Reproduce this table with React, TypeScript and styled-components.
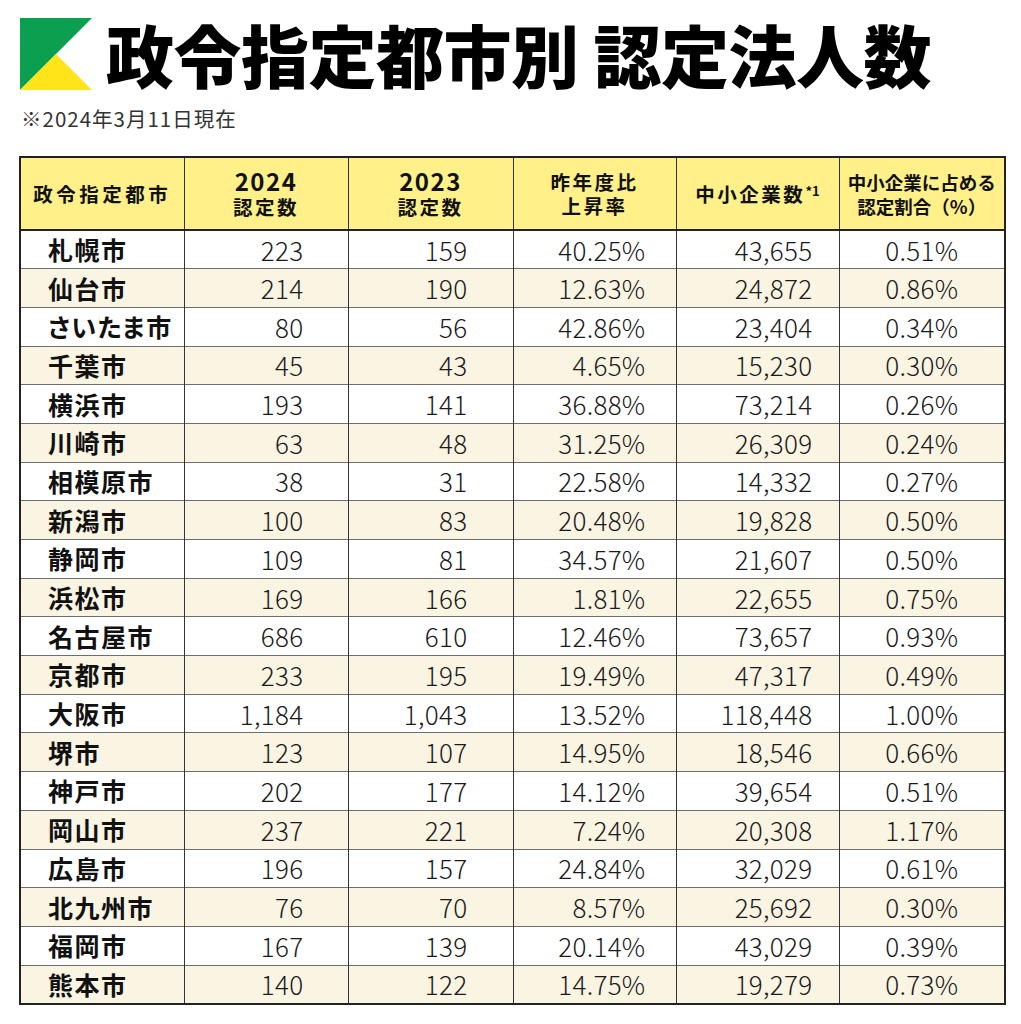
import { createGlobalStyle, styled } from 'styled-components';

const GlobalStyle = createGlobalStyle`
  html, body {
    margin: 0;
    padding: 0;
    background: #ffffff;
  }

  body {
    font-family: 'Noto Sans CJK JP', 'Noto Sans', sans-serif;
    color: #111111;
  }
`;

const SPage = styled.div`
  width: 1021px;
  padding: 18px 0 0 20px;
  box-sizing: border-box;
`;

const STitleBar = styled.header`
  display: flex;
  align-items: center;
  gap: 14px;
  height: 72px;
`;

const SLogo = styled.svg`
  flex: 0 0 72px;
  width: 72px;
  height: 72px;
`;

const STitle = styled.h1`
  margin: 0;
  font-size: 68px;
  font-weight: 900;
  line-height: 1;
  letter-spacing: -0.5px;
  color: #000000;
  white-space: nowrap;
`;

const SAsOf = styled.p`
  margin: 16px 0 0 1px;
  font-size: 20.5px;
  line-height: 24px;
  letter-spacing: 1px;
  color: #333333;
`;

const STable = styled.table`
  margin: 26px 0 0 -1px;
  width: 985px;
  table-layout: fixed;
  border-collapse: collapse;
  border: 2px solid #222222;
`;

const SHeadCell = styled.th<{ $tight?: boolean }>`
  height: 71px;
  padding: 0;
  background: #fff08a;
  border-left: 1.5px solid #333333;
  border-bottom: 2px solid #222222;
  font-size: ${({ $tight }) => ($tight ? '18.5px' : '19.5px')};
  font-weight: 700;
  line-height: 24px;
  letter-spacing: ${({ $tight }) => ($tight ? '0' : '2.5px')};
  text-align: center;
  vertical-align: middle;
  color: #111111;
`;

const SFirstHead = styled(SHeadCell)`
  letter-spacing: 3.5px;
`;

const SYear = styled.span`
  display: block;
  margin-bottom: 1px;
  font-size: 24px;
  line-height: 26px;
  letter-spacing: 1.5px;
`;

const SSup = styled.sup`
  font-size: 13px;
  line-height: 0;
  letter-spacing: 0;
  vertical-align: 6px;
`;

const SRow = styled.tr<{ $shaded: boolean }>`
  height: 38.7px;
  background: ${({ $shaded }) => ($shaded ? '#faf4e3' : '#ffffff')};

  & + & {
    border-top: 1px solid #6e6e6e;
  }
`;

const SNameCell = styled.td`
  padding: 0 0 0 27px;
  border-left: 1.5px solid #333333;
  font-size: 25px;
  font-weight: 700;
  font-feature-settings: 'palt';
  letter-spacing: 1.5px;
  line-height: 1;
  white-space: nowrap;
  color: #111111;
`;

const SNumCell = styled.td<{ $pad: number; $center?: boolean }>`
  padding: 0 ${({ $pad }) => $pad}px 0 0;
  border-left: 1.5px solid #333333;
  font-size: 26px;
  font-weight: 300;
  line-height: 1;
  letter-spacing: 0.3px;
  text-align: ${({ $center }) => ($center ? 'center' : 'right')};
  color: #1a1a1a;
`;

type CityRow = [string, string, string, string, string, string];

const rows: CityRow[] = [
  ['札幌市', '223', '159', '40.25%', '43,655', '0.51%'],
  ['仙台市', '214', '190', '12.63%', '24,872', '0.86%'],
  ['さいたま市', '80', '56', '42.86%', '23,404', '0.34%'],
  ['千葉市', '45', '43', '4.65%', '15,230', '0.30%'],
  ['横浜市', '193', '141', '36.88%', '73,214', '0.26%'],
  ['川崎市', '63', '48', '31.25%', '26,309', '0.24%'],
  ['相模原市', '38', '31', '22.58%', '14,332', '0.27%'],
  ['新潟市', '100', '83', '20.48%', '19,828', '0.50%'],
  ['静岡市', '109', '81', '34.57%', '21,607', '0.50%'],
  ['浜松市', '169', '166', '1.81%', '22,655', '0.75%'],
  ['名古屋市', '686', '610', '12.46%', '73,657', '0.93%'],
  ['京都市', '233', '195', '19.49%', '47,317', '0.49%'],
  ['大阪市', '1,184', '1,043', '13.52%', '118,448', '1.00%'],
  ['堺市', '123', '107', '14.95%', '18,546', '0.66%'],
  ['神戸市', '202', '177', '14.12%', '39,654', '0.51%'],
  ['岡山市', '237', '221', '7.24%', '20,308', '1.17%'],
  ['広島市', '196', '157', '24.84%', '32,029', '0.61%'],
  ['北九州市', '76', '70', '8.57%', '25,692', '0.30%'],
  ['福岡市', '167', '139', '20.14%', '43,029', '0.39%'],
  ['熊本市', '140', '122', '14.75%', '19,279', '0.73%'],
];

const Logo = () => (
  <SLogo viewBox='0 0 72 72'>
    <polygon points='0,0 72,0 0,72' fill='#0aa04f' />
    <polygon points='0,72 36,36 72,72' fill='#ffe41a' />
  </SLogo>
);

const App = () => (
  <SPage>
    <GlobalStyle />
    <STitleBar>
      <Logo />
      <STitle>政令指定都市別 認定法人数</STitle>
    </STitleBar>
    <SAsOf>※2024年3月11日現在</SAsOf>

    <STable>
      <colgroup>
        <col style={{ width: 164 }} />
        <col style={{ width: 164 }} />
        <col style={{ width: 165 }} />
        <col style={{ width: 163 }} />
        <col style={{ width: 163 }} />
        <col style={{ width: 166 }} />
      </colgroup>
      <thead>
        <tr>
          <SFirstHead>政令指定都市</SFirstHead>
          <SHeadCell>
            <SYear>2024</SYear>
            認定数
          </SHeadCell>
          <SHeadCell>
            <SYear>2023</SYear>
            認定数
          </SHeadCell>
          <SHeadCell>
            昨年度比
            <br />
            上昇率
          </SHeadCell>
          <SHeadCell>
            中小企業数<SSup>*1</SSup>
          </SHeadCell>
          <SHeadCell $tight>
            中小企業に占める
            <br />
            認定割合（%）
          </SHeadCell>
        </tr>
      </thead>
      <tbody>
        {rows.map(([city, y2024, y2023, rise, smes, share], index) => (
          <SRow key={city} $shaded={index % 2 === 1}>
            <SNameCell>{city}</SNameCell>
            <SNumCell $pad={44}>{y2024}</SNumCell>
            <SNumCell $pad={45}>{y2023}</SNumCell>
            <SNumCell $pad={30}>{rise}</SNumCell>
            <SNumCell $pad={26}>{smes}</SNumCell>
            <SNumCell $pad={0} $center>
              {share}
            </SNumCell>
          </SRow>
        ))}
      </tbody>
    </STable>
  </SPage>
);

export default App;
